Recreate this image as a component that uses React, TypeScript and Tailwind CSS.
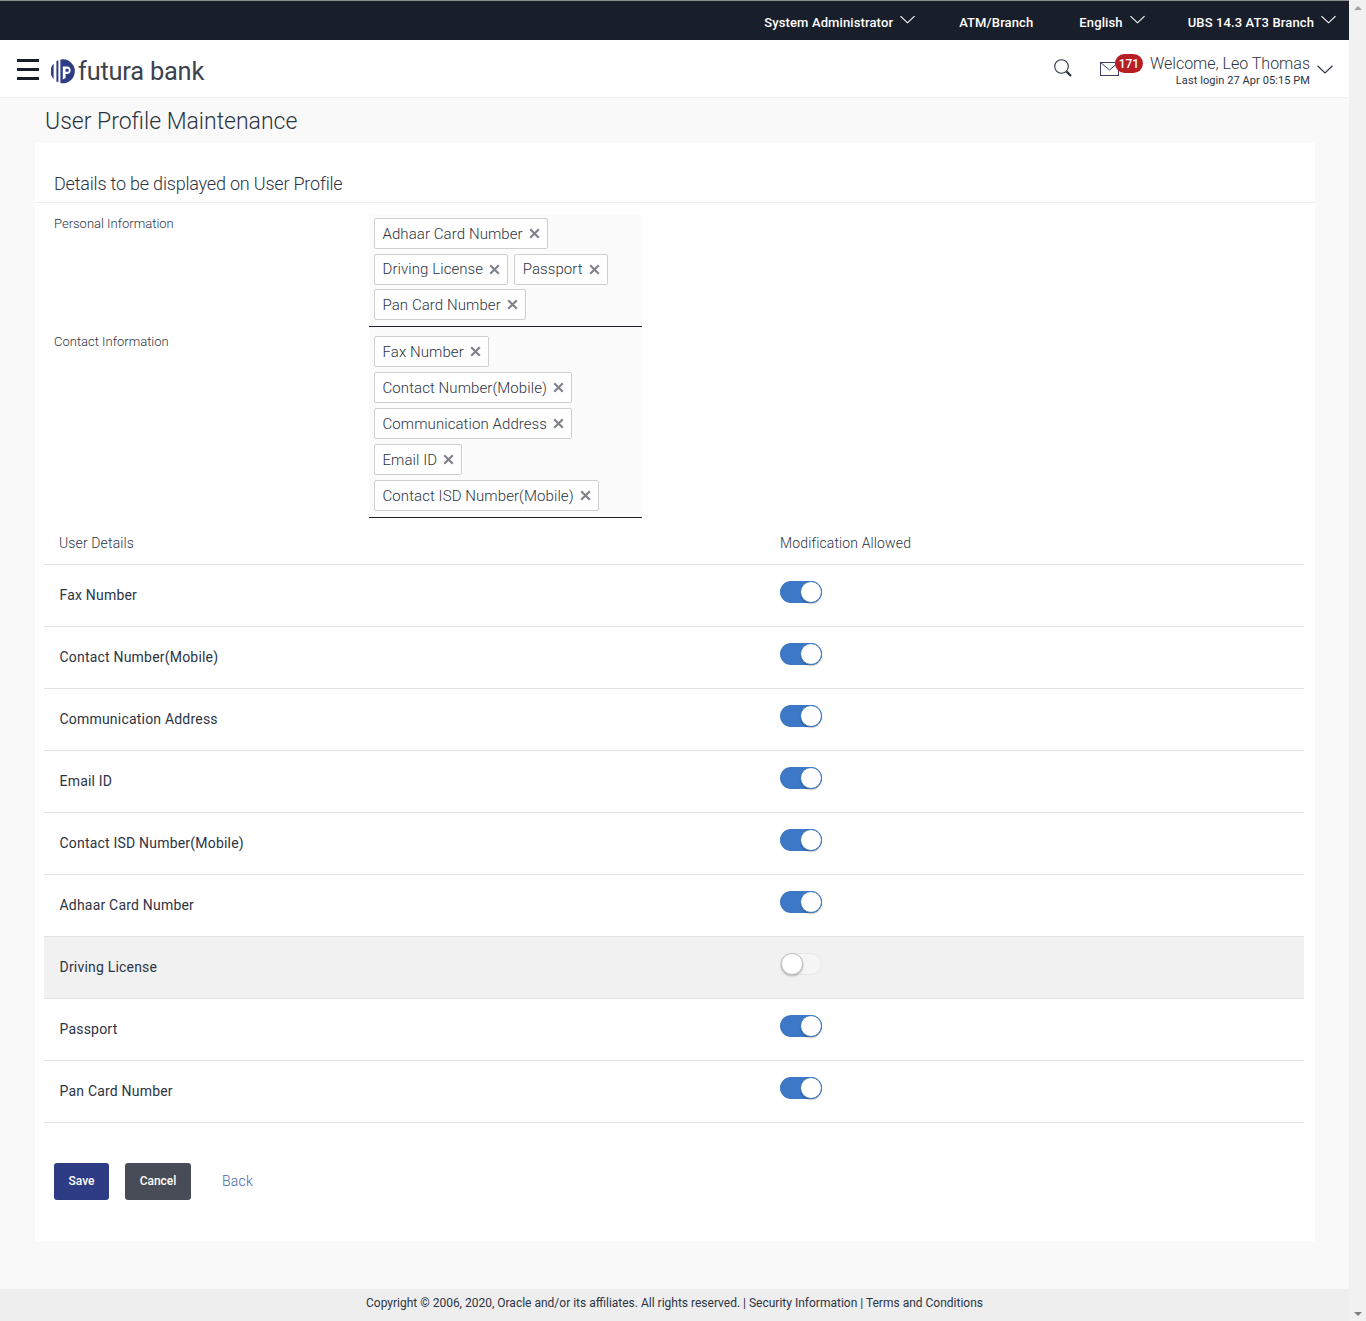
const roboto = "font-['Roboto',sans-serif]";

function Chevron({ className }: { className: string }) {
  return (
    <svg className={className} viewBox="0 0 16 9" fill="none" stroke="currentColor" strokeWidth="1.2">
      <path d="M0.5 0.8 L8 8 L15.5 0.8" />
    </svg>
  );
}

function Logo() {
  return (
    <svg width="25" height="25" viewBox="0 0 25 25" className="shrink-0">
      <path d="M2.6 4.4 A12 12 0 0 0 2.6 20.2 Z" fill="#2e3c86" />
      <path d="M5.4 2.2 L5.4 22.4 L7.4 23.3 L7.4 1.2 Z" fill="#2e3c86" />
      <path fillRule="evenodd" d="M9.4 0.5 A12 12 0 1 1 9.4 24 Z M11.8 7.4 V20.4 L14.6 19 V15 H16.6 A3.9 3.9 0 0 0 16.6 7.4 Z M14.6 9.8 H16.4 A1.5 1.5 0 0 1 16.4 12.8 H14.6 Z" fill="#2e3c86" />
    </svg>
  );
}

function Tag({ label }: { label: string }) {
  return (
    <span className="inline-flex h-[31px] items-center rounded-[2px] border border-[#cfcfcf] bg-white pl-[7.5px] pr-[7px] text-[15px] font-light tracking-[0.08px] text-[#2c3444]">
      <span className="pt-px">{label}</span>
      <svg className="ml-[6px] h-[11px] w-[11px] text-[#80838a]" viewBox="0 0 11 11" stroke="currentColor" strokeWidth="2.2">
        <path d="M1.2 1.2 L9.8 9.8 M9.8 1.2 L1.2 9.8" />
      </svg>
    </span>
  );
}

function TagField({ rows, className }: { rows: string[][]; className: string }) {
  return (
    <div className={`w-[273px] border-b border-[#1b202c] bg-[#fbfbfb] pl-[5px] ${className}`}>
      {rows.map((r) => (
        <div key={r[0]} className="flex gap-[6px]">
          {r.map((t) => (
            <Tag key={t} label={t} />
          ))}
        </div>
      ))}
    </div>
  );
}

function Toggle({ on }: { on: boolean }) {
  return on ? (
    <span className="flex h-[22px] w-[42px] justify-end rounded-full bg-[#3c78c6]">
      <span className="h-[22px] w-[22px] rounded-full border border-[#3c78c6] bg-white shadow-[0_1px_1px_rgba(0,0,0,0.25)]" />
    </span>
  ) : (
    <span className="flex h-[22px] w-[42px] rounded-full border border-[#e8e8e8] bg-[#f5f5f5]">
      <span className="-mt-px h-[22px] w-[22px] rounded-full border border-[#c4c4c4] bg-white shadow-[0_1px_2px_rgba(0,0,0,0.3)]" />
    </span>
  );
}

const rows: [string, boolean][] = [
  ["Fax Number", true],
  ["Contact Number(Mobile)", true],
  ["Communication Address", true],
  ["Email ID", true],
  ["Contact ISD Number(Mobile)", true],
  ["Adhaar Card Number", true],
  ["Driving License", false],
  ["Passport", true],
  ["Pan Card Number", true],
];

export default function App() {
  return (
    <div className={`flex h-[1321px] w-[1366px] overflow-hidden bg-[#f9f9f9] ${roboto}`}>
      <div className="flex w-[1349px] flex-col">
        <div className="flex h-10 items-center justify-end border-t border-[#8a8c90] bg-[#191e2b] pr-[13px] pt-[5px] text-[13px] font-medium tracking-[0.12px] text-white">
          <span>System Administrator</span>
          <Chevron className="ml-[7px] mb-[7px] h-[9px] w-[15px]" />
          <span className="ml-[44px]">ATM/Branch</span>
          <span className="ml-[46px]">English</span>
          <Chevron className="ml-[7px] mb-[7px] h-[9px] w-[15px]" />
          <span className="ml-[43px]">UBS 14.3 AT3 Branch</span>
          <Chevron className="ml-[7px] mb-[7px] h-[9px] w-[15px]" />
        </div>

        <div className="flex h-[58px] items-center border-b border-[#efefef] bg-white pl-[17px]">
          <div className="mt-[2px] flex w-[22px] flex-col gap-[6px]">
            <span className="h-[3px] bg-[#191e2b]" />
            <span className="h-[3px] bg-[#191e2b]" />
            <span className="h-[3px] bg-[#191e2b]" />
          </div>
          <div className="ml-[12px] mt-[5px] flex items-center gap-[2px]">
            <Logo />
            <span className="pt-px text-[25.4px] leading-none tracking-[-0.2px] text-[#3c424e]">futura bank</span>
          </div>
          <div className="ml-auto flex items-center pr-[16px]">
            <svg width="20" height="20" viewBox="0 0 20 20" fill="none" stroke="#2c3444" className="-mt-[2px] mr-[26px]">
              <circle cx="8.5" cy="8.5" r="6.8" strokeWidth="1.1" />
              <path d="M13.6 13.6 L18 18" strokeWidth="2.2" />
            </svg>
            <div className="relative mr-[7px] h-[13px] w-[44px]">
              <svg width="19" height="14" viewBox="0 0 19 14" fill="none" stroke="#3a3f63" strokeWidth="1" className="ml-px">
                <rect x="0.5" y="0.5" width="18" height="13" />
                <path d="M0.5 0.5 L9.5 8 L18.5 0.5" />
              </svg>
              <span className="absolute left-[16px] top-[-8px] flex h-[19px] w-[28px] items-center justify-center rounded-full bg-[#b71f24] text-[12px] font-medium text-white">171</span>
            </div>
            <div className="flex flex-col items-end pt-[5px]">
              <span className="text-[16px] font-light leading-[18px] text-[#2c3444]">Welcome, Leo Thomas</span>
              <span className="mt-[1px] text-[11px] leading-[14px] tracking-[0.08px] text-[#2c3444]">Last login 27 Apr 05:15 PM</span>
            </div>
            <Chevron className="ml-[7px] mt-[2px] h-[9px] w-[16px] text-[#2c3444]" />
          </div>
        </div>

        <h1 className="ml-[45px] mt-[9px] h-[36px] text-[23px] font-light leading-[30px] text-[#2c3444]">User Profile Maintenance</h1>

        <div className="ml-[35px] w-[1280px] bg-white">
          <div className="flex h-[60px] items-end border-b border-[#f0f0f0] pb-[6px] pl-[19px] text-[18px] font-light leading-[24px] tracking-[-0.2px] text-[#2c3444]">
            Details to be displayed on User Profile
          </div>
          <div className="flex pl-[19px] pt-[11px]">
            <div className="w-[315px] pt-[2px] text-[13px] font-light leading-[16px] text-[#2c3444]">Personal Information</div>
            <TagField
              className="flex h-[113px] flex-col justify-start gap-[4.5px] pt-[4px]"
              rows={[["Adhaar Card Number"], ["Driving License", "Passport"], ["Pan Card Number"]]}
            />
          </div>
          <div className="flex pl-[19px]">
            <div className="w-[315px] pt-[7px] text-[13px] font-light leading-[16px] text-[#2c3444]">Contact Information</div>
            <TagField
              className="flex h-[191px] flex-col justify-start gap-[5px] pt-[9px]"
              rows={[["Fax Number"], ["Contact Number(Mobile)"], ["Communication Address"], ["Email ID"], ["Contact ISD Number(Mobile)"]]}
            />
          </div>

          <div className="ml-[9px] mt-[9px] w-[1260px]">
            <div className="flex h-[38px] items-center border-b border-[#e2e2e2] pb-[4px] text-[14px] font-light tracking-[0.13px] text-[#2c3444]">
              <span className="w-[736px] pl-[15px]">User Details</span>
              <span>Modification Allowed</span>
            </div>
            {rows.map(([label, on]) => (
              <div key={label} className={`flex h-[62px] border-b border-[#e2e2e2] text-[14px] tracking-[0.2px] text-[#2c3444] ${on ? "" : "bg-[#f1f1f1]"}`}>
                <span className="flex w-[736px] items-center pl-[15.5px]">{label}</span>
                <span className="pt-[16px]"><Toggle on={on} /></span>
              </div>
            ))}
          </div>

          <div className="flex h-[118px] items-start pl-[19px] pt-[40px]">
            <button className="h-[37px] w-[55px] rounded-[3px] bg-[#2e3c86] pb-[2px] text-[12px] font-medium text-white">Save</button>
            <button className="ml-[16px] h-[37px] w-[66px] rounded-[3px] bg-[#484c56] pb-[2px] text-[12px] font-medium text-white">Cancel</button>
            <span className="ml-[31px] flex h-[37px] items-center text-[14px] font-light tracking-[0.2px] text-[#3e6aa8]">Back</span>
          </div>
        </div>

        <div className="mt-auto flex h-[32px] items-center justify-center bg-[#eeeeee] pb-[4px] text-[12px] text-[#2c3444]">
          Copyright © 2006, 2020, Oracle and/or its affiliates. All rights reserved. | Security Information | Terms and Conditions
        </div>
      </div>

      <div className="flex w-[17px] flex-col items-center justify-between bg-[#f1f1f1] pb-[5px] pt-[6px]">
        <span className="h-0 w-0 border-x-[4px] border-b-[4px] border-x-transparent border-b-[#a3a3a3]" />
        <span className="h-0 w-0 border-x-[4px] border-t-[4px] border-x-transparent border-t-[#808080]" />
      </div>
    </div>
  );
}
